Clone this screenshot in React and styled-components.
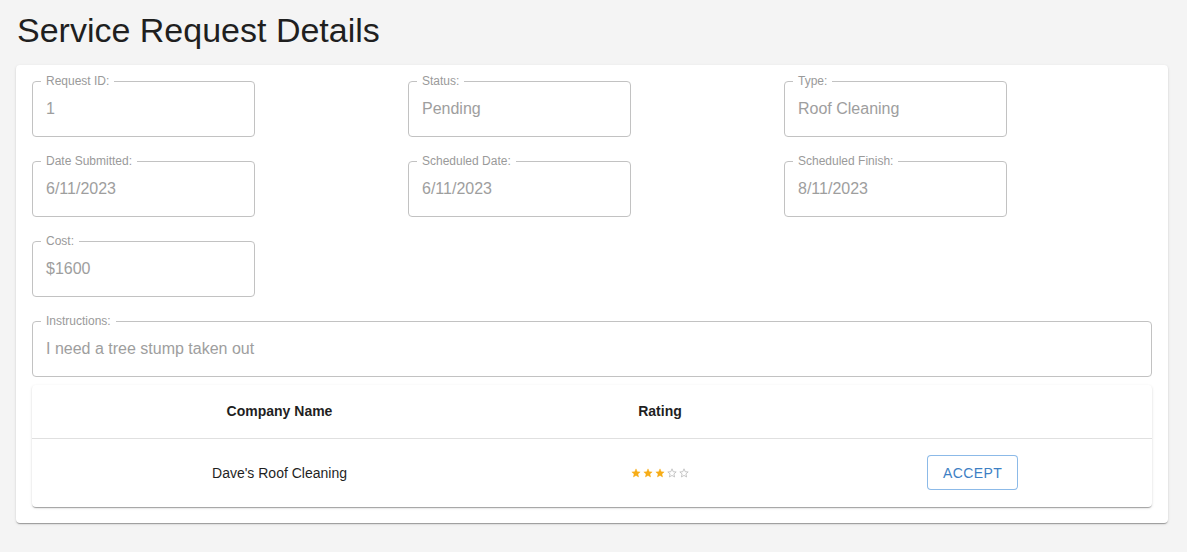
import React from "react";
import styled, { createGlobalStyle } from "styled-components";

const GlobalStyle = createGlobalStyle`
  html, body { margin: 0; padding: 0; background: #f4f4f4; }
  body { font-family: "Liberation Sans", Arial, sans-serif; color: rgba(0,0,0,0.87); }
  * { box-sizing: border-box; }
`;

const Page = styled.div`
  padding: 9px 19px 29px 16px;
`;

const Title = styled.h1`
  margin: 0 0 14px 1px;
  font-size: 34px;
  font-weight: 400;
  line-height: 42px;
  color: #1f1f1f;
`;

const Card = styled.div`
  background: #fff;
  border-radius: 4px;
  padding: 16px;
  box-shadow: 0 2px 1px -1px rgba(0,0,0,0.2), 0 1px 1px 0 rgba(0,0,0,0.14), 0 1px 3px 0 rgba(0,0,0,0.12);
`;

const FieldGrid = styled.div`
  display: grid;
  grid-template-columns: repeat(3, 376px);
  row-gap: 24px;
`;

const Field = styled.div`
  position: relative;
  width: ${(p) => (p.$wide ? "1120px" : "223px")};
  grid-column: ${(p) => (p.$wide ? "1 / -1" : "auto")};
  height: 56px;
  border: 1px solid #c2c2c2;
  border-radius: 4px;
  padding: 17px 13px 0;
`;

const Label = styled.span`
  position: absolute;
  top: -7px;
  left: 8px;
  font-size: 12px;
  line-height: 13px;
  color: #9a9a9a;
  padding: 0 5px;
  background: #fff;
`;

const Value = styled.div`
  font-size: 16px;
  line-height: 19px;
  color: #9e9e9e;
`;

const FieldSpacer = styled.div`
  height: 0;
`;

const TablePaper = styled.div`
  margin-top: 8px;
  background: #fff;
  border-radius: 4px;
  box-shadow: 0 2px 1px -1px rgba(0,0,0,0.2), 0 1px 1px 0 rgba(0,0,0,0.14), 0 1px 3px 0 rgba(0,0,0,0.12);
  overflow: hidden;
`;

const Table = styled.table`
  width: 100%;
  border-collapse: collapse;
  table-layout: fixed;
`;

const HeadCell = styled.th`
  font-size: 14px;
  font-weight: 700;
  line-height: 20px;
  padding: 16px;
  text-align: center;
  color: #1f1f1f;
  border-bottom: 1px solid #e0e0e0;
  height: 53px;
`;

const BodyCell = styled.td`
  font-size: 14px;
  line-height: 20px;
  padding: 16px;
  text-align: center;
  color: #1f1f1f;
  height: 69px;
`;

const Stars = styled.span`
  display: inline-flex;
  gap: 2px;
  vertical-align: middle;
  position: relative;
  top: -1px;
`;

const AcceptButton = styled.button`
  font-family: "Liberation Sans", Arial, sans-serif;
  font-size: 14px;
  letter-spacing: 0.4px;
  text-transform: uppercase;
  color: #3d7fc4;
  background: #fff;
  border: 1px solid rgba(25,118,210,0.5);
  border-radius: 4px;
  height: 35px;
  width: 91px;
  padding: 0;
  cursor: pointer;
`;

const Star = ({ filled }) => (
  <svg width="10" height="10" viewBox="0 0 24 24">
    <path
      d="M12 2l2.9 6.9 7.1.6-5.4 4.7 1.6 7.3L12 17.8l-6.2 3.7 1.6-7.3L2 9.5l7.1-.6z"
      fill={filled ? "#f7ad17" : "none"}
      stroke={filled ? "#f7ad17" : "#bdbdbd"}
      strokeWidth={filled ? 1 : 2}
      strokeLinejoin="round"
    />
  </svg>
);

const fields = [
  ["Request ID:", "1"],
  ["Status:", "Pending"],
  ["Type:", "Roof Cleaning"],
  ["Date Submitted:", "6/11/2023"],
  ["Scheduled Date:", "6/11/2023"],
  ["Scheduled Finish:", "8/11/2023"],
  ["Cost:", "$1600"],
];

export default function App() {
  return (
    <>
      <GlobalStyle />
      <Page>
        <Title>Service Request Details</Title>
        <Card>
          <FieldGrid>
            {fields.map(([label, value]) => (
              <Field key={label}>
                <Label>{label}</Label>
                <Value>{value}</Value>
              </Field>
            ))}
            <FieldSpacer />
            <FieldSpacer />
            <Field $wide>
              <Label>Instructions:</Label>
              <Value>I need a tree stump taken out</Value>
            </Field>
          </FieldGrid>
          <TablePaper>
            <Table>
              <colgroup>
                <col style={{ width: "495px" }} />
                <col style={{ width: "266px" }} />
                <col style={{ width: "359px" }} />
              </colgroup>
              <thead>
                <tr>
                  <HeadCell>Company Name</HeadCell>
                  <HeadCell>Rating</HeadCell>
                  <HeadCell />
                </tr>
              </thead>
              <tbody>
                <tr>
                  <BodyCell>Dave's Roof Cleaning</BodyCell>
                  <BodyCell>
                    <Stars>
                      {[1, 2, 3, 4, 5].map((i) => (
                        <Star key={i} filled={i <= 3} />
                      ))}
                    </Stars>
                  </BodyCell>
                  <BodyCell>
                    <AcceptButton>Accept</AcceptButton>
                  </BodyCell>
                </tr>
              </tbody>
            </Table>
          </TablePaper>
        </Card>
      </Page>
    </>
  );
}
